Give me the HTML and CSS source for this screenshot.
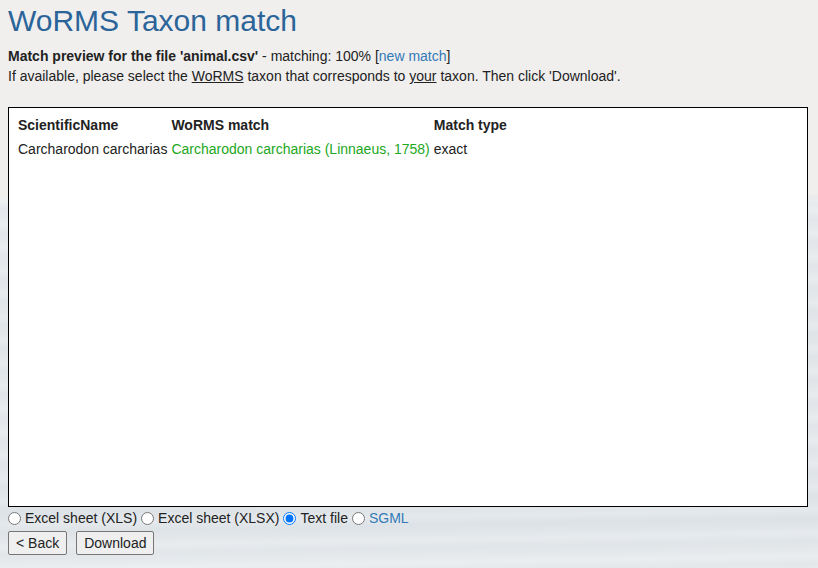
FILE: index.html
```html
<!DOCTYPE html>
<html lang="en">
<head>
<meta charset="utf-8">
<title>WoRMS Taxon match</title>
<link rel="stylesheet" href="styles.css">
</head>
<body>
<div class="page">
  <h1 class="title">WoRMS Taxon match</h1>
  <p class="intro">
    <b>Match preview for the file 'animal.csv'</b> - matching: 100% [<a href="#" class="link">new match</a>]<br>
    If available, please select the <u>WoRMS</u> taxon that corresponds to <u>your</u> taxon. Then click 'Download'.
  </p>
  <div class="preview">
    <table class="matches">
      <thead>
        <tr><th>ScientificName</th><th class="col-match">WoRMS match</th><th>Match type</th></tr>
      </thead>
      <tbody>
        <tr><td>Carcharodon carcharias</td><td class="ok">Carcharodon carcharias (Linnaeus, 1758)</td><td>exact</td></tr>
      </tbody>
    </table>
  </div>
  <div class="formats">
    <label><input type="radio" name="fmt"> Excel sheet (XLS)</label>
    <label><input type="radio" name="fmt"> Excel sheet (XLSX)</label>
    <label><input type="radio" name="fmt" checked> Text file</label>
    <label><input type="radio" name="fmt"> <a href="#" class="link">SGML</a></label>
  </div>
  <div class="actions">
    <button type="button" class="btn">&lt; Back</button>
    <button type="button" class="btn">Download</button>
  </div>
</div>
</body>
</html>
```
FILE: styles.css
```css
html, body {
  margin: 0;
  padding: 0;
  height: 100%;
}
body {
  font-family: "Liberation Sans", Arial, sans-serif;
  font-size: 14px;
  line-height: 20px;
  color: #222;
  background-color: #f0efee;
  background-image:
    repeating-linear-gradient(179deg, rgba(255,255,255,0) 0px, rgba(255,255,255,0.18) 7px, rgba(205,213,220,0.14) 15px, rgba(255,255,255,0) 23px),
    linear-gradient(to bottom, #f0efee 0px, #f0efee 195px, #e7eaed 205px, #e2e6e9 330px, #e5e8eb 430px, #dfe4e8 520px, #e8ebed 568px);
  background-repeat: no-repeat;
  background-size: 100% 373px, 100% 100%;
  background-position: 0 195px, 0 0;
}
.page {
  padding: 3px 8px 0 8px;
}
.title {
  margin: 0;
  font-size: 30px;
  line-height: 36px;
  font-weight: normal;
  color: #2b6499;
}
.intro {
  margin: 7px 0 0 0;
}
.intro b {
  font-weight: bold;
}
.link {
  color: #337ab7;
  text-decoration: none;
}
.preview {
  margin-top: 21px;
  width: 798px;
  height: 398px;
  border: 1px solid #000;
  background: #fff;
}
.matches {
  margin: 4px 0 0 6px;
  border-collapse: separate;
  border-spacing: 2px;
}
.matches th,
.matches td {
  text-align: left;
  padding: 1px 1px;
  white-space: nowrap;
}
.matches th {
  font-weight: bold;
}
.ok {
  color: #22a722;
}
.formats {
  display: flex;
  align-items: center;
  gap: 4px;
  height: 20px;
  margin-top: 1px;
}
.formats label {
  display: flex;
  align-items: center;
  gap: 4px;
}
.formats input {
  margin: 0;
  width: 13px;
  height: 13px;
}
.actions {
  display: flex;
  gap: 9px;
  margin-top: 3px;
}
.btn {
  font: inherit;
  line-height: 20px;
  padding: 1px 7px;
  color: #222;
  background: #efefef;
  border: 1px solid #767676;
  border-radius: 2px;
}
```
